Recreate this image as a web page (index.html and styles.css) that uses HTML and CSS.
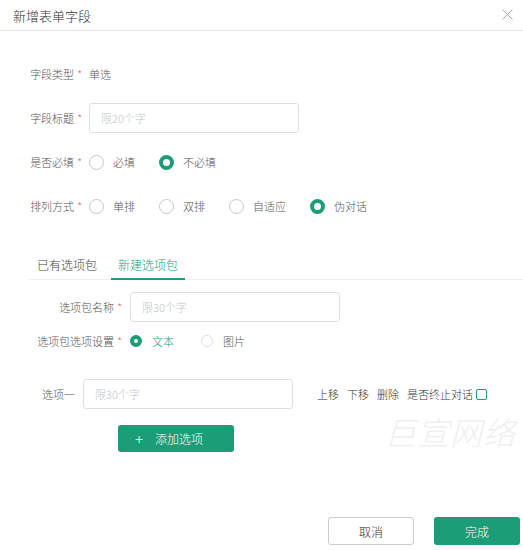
FILE: index.html
```html
<!DOCTYPE html>
<html>

<head>
    <meta charset="utf-8">
    <title>新增表单字段</title>
    <link rel="stylesheet" href="styles.css">
</head>

<body>

    <div class="dialog">
        <div class="head">
            <span class="title">新增表单字段</span>
            <svg class="close" width="11" height="11" viewBox="0 0 11 11">
                <path d="M0.5 0.5 L10.5 10.5 M10.5 0.5 L0.5 10.5" stroke="#aaa" stroke-width="1" fill="none"/>
            </svg>
        </div>

        <div class="body">
            <div class="row">
                <div class="lbl">字段类型<i>*</i></div>
                <span class="val">单选</span>
            </div>
            <div class="row">
                <div class="lbl">字段标题<i>*</i></div>
                <div class="input">限20个字</div>
            </div>
            <div class="row">
                <div class="lbl">是否必填<i>*</i></div>
                <span class="radio"><b></b>必填</span>
                <span class="radio on"><b></b>不必填</span>
            </div>
            <div class="row">
                <div class="lbl">排列方式<i>*</i></div>
                <span class="radio"><b></b>单排</span>
                <span class="radio"><b></b>双排</span>
                <span class="radio"><b></b>自适应</span>
                <span class="radio on"><b></b>伪对话</span>
            </div>

            <div class="tabs">
                <div class="tab">已有选项包</div>
                <div class="tab active">新建选项包</div>
            </div>

            <div class="row pack first">
                <div class="lbl">选项包名称<i>*</i></div>
                <div class="input">限30个字</div>
            </div>
            <div class="row pack second">
                <div class="lbl">选项包选项设置<i>*</i></div>
                <span class="mini on"><b></b>文本</span>
                <span class="mini"><b></b>图片</span>
            </div>

            <div class="row opt">
                <div class="lbl">选项一</div>
                <div class="input">限30个字</div>
                <div class="actions">
                    <span>上移</span>
                    <span>下移</span>
                    <span>删除</span>
                    <span>是否终止对话</span>
                    <span class="check"></span>
                </div>
            </div>

            <div class="addbar">
                <button class="add"><span class="plus">+</span>添加选项</button>
            </div>
        </div>

        <div class="foot">
            <button class="btn cancel">取消</button>
            <button class="btn ok">完成</button>
        </div>

        <div class="mark">巨宣网络</div>
    </div>

</body>

</html>
```

FILE: styles.css
```css
/* General styles */

html {
    background-color: white;
    height: 100%;
}

body {
    height: inherit;
    margin: 0;
    font-family: "Noto Sans CJK SC", "Noto Sans", sans-serif;
    font-size: 11px;
    font-weight: 300;
    color: #333;
}

* {
    box-sizing: border-box;
}

/* Dialog */

.dialog {
    position: relative;
    height: 550px;
    display: flex;
    flex-direction: column;
    overflow: hidden;
}

.head {
    height: 31px;
    border-bottom: 1px solid #e6e6e6;
    display: flex;
    align-items: center;
    justify-content: space-between;
    padding: 0 10px 0 13px;
}

.title {
    font-size: 13px;
    color: #333;
}

.close {
    margin-top: -2px;
}

.body {
    padding-top: 28px;
}

/* Form rows */

.row {
    height: 30px;
    display: flex;
    align-items: center;
    margin-bottom: 14px;
}

.lbl {
    width: 82px;
    text-align: right;
    margin-right: 7px;
    color: #555;
    white-space: nowrap;
}

.lbl i {
    font-style: normal;
    color: #f56c6c;
    margin-left: 3px;
}

.val {
    color: #555;
}

.input {
    width: 210px;
    height: 30px;
    border: 1px solid #dcdfe6;
    border-radius: 3px;
    padding-left: 11px;
    line-height: 28px;
    color: #c0c4cc;
}

.radio {
    display: flex;
    align-items: center;
    margin-right: 24px;
    color: #555;
}

.radio b {
    width: 15px;
    height: 15px;
    border: 1px solid #c8c8c8;
    border-radius: 50%;
    margin-right: 9px;
}

.radio.on b {
    border: 4px solid #1b9e77;
}

/* Tabs */

.tabs {
    display: flex;
    margin: 31px 0 0 29px;
    border-bottom: 1px solid #eee;
    height: 28px;
}

.tab {
    height: 28px;
    line-height: 26px;
    padding: 0 7px;
    margin-right: 7px;
    font-size: 12px;
    color: #444;
    border-bottom: 2px solid transparent;
    margin-bottom: -1px;
}

.tab:first-child {
    padding-left: 8px;
}

.tab.active {
    color: #1b9e77;
    border-bottom-color: #1b9e77;
}

/* Option pack */

.pack .lbl {
    width: 122px;
    margin-right: 8px;
}

.pack.first {
    margin-top: 12px;
    margin-bottom: 4px;
}

.pack.second {
    margin-bottom: 23px;
}

.mini {
    display: flex;
    align-items: center;
    margin-right: 27px;
    color: #555;
}

.mini b {
    width: 12px;
    height: 12px;
    border: 1px solid #ddd;
    border-radius: 50%;
    margin-right: 10px;
}

.mini.on {
    color: #1b9e77;
}

.mini.on b {
    border: 4px solid #1b9e77;
}

.opt {
    margin-bottom: 16px;
}

.opt .lbl {
    width: 75px;
    margin-right: 8px;
}

.actions {
    display: flex;
    align-items: center;
    margin-left: 24px;
    color: #333;
}

.actions span {
    margin-right: 8px;
}

.actions .check {
    width: 11px;
    height: 11px;
    border: 1px solid #1b9e77;
    border-radius: 2px;
    margin: 1px 0 0 -5px;
}

.addbar {
    padding-left: 118px;
}

.add {
    width: 116px;
    height: 27px;
    border: 0;
    border-radius: 3px;
    background-color: #1b9e77;
    color: white;
    font-family: inherit;
    font-weight: 300;
    font-size: 12px;
    text-align: left;
    padding: 0 0 0 17px;
    display: flex;
    align-items: center;
}

.add .plus {
    font-size: 15px;
    margin-right: 12px;
}

/* Footer */

.foot {
    margin-top: auto;
    display: flex;
    justify-content: flex-end;
    padding: 0 3px 5px 0;
}

.btn {
    width: 86px;
    height: 28px;
    border-radius: 3px;
    font-family: inherit;
    font-weight: 300;
    font-size: 12px;
    margin-left: 20px;
}

.cancel {
    background-color: white;
    border: 1px solid #ccc;
    color: #333;
}

.ok {
    background-color: #1b9e77;
    border: 0;
    color: white;
}

/* Watermark */

.mark {
    position: absolute;
    top: 408px;
    left: 384px;
    font-size: 32px;
    font-style: italic;
    font-weight: 300;
    color: #efefef;
    letter-spacing: 1px;
    pointer-events: none;
}
```
